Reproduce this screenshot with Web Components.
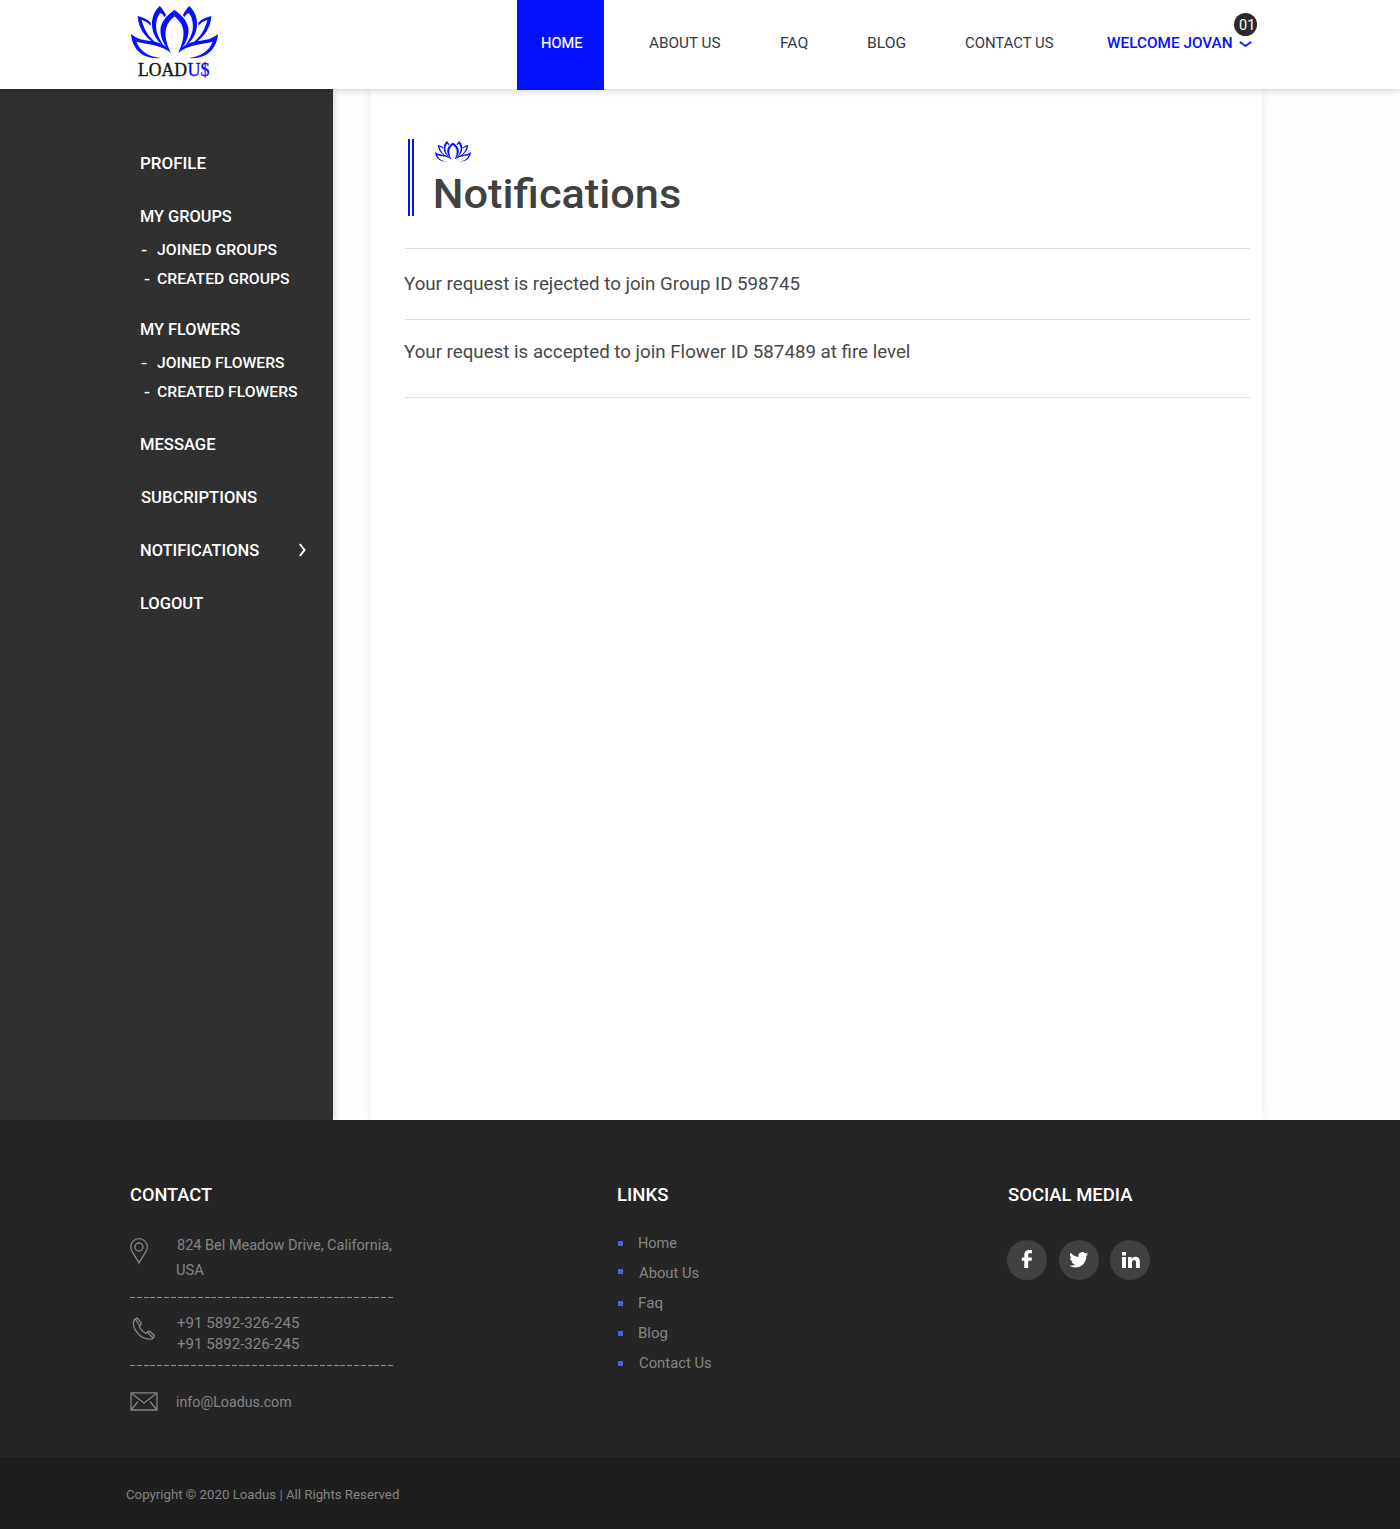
<!DOCTYPE html>
<html lang="en"><head><meta charset="utf-8"><title>Loadus - Notifications</title>
<style>
html,body{margin:0;background:#fefefe;font-family:Roboto,"Open Sans",sans-serif}
</style></head><body><loadus-app></loadus-app>
<script>
const ctx=document.createElement('canvas').getContext('2d');
// A single line of text stretched so that its ink is exactly `w` pixels wide.
class FitText extends HTMLElement{
  connectedCallback(){
    if(!this.shadowRoot)this.attachShadow({mode:'open'}).innerHTML='<style>:host{display:block;white-space:pre;flex:none}span{display:inline-block;vertical-align:top;transform-origin:0 0}</style><span><slot></slot></span>';
    const s=getComputedStyle(this),t=this.textContent,w=+this.getAttribute('w');
    ctx.font=`${s.fontWeight} ${s.fontSize} ${s.fontFamily}`;
    const m=ctx.measureText(t),k=w/(m.actualBoundingBoxLeft+m.actualBoundingBoxRight);
    this.style.width=w+'px';
    this.shadowRoot.querySelector('span').style.transform=`translateX(${(m.actualBoundingBoxLeft*k).toFixed(3)}px) scaleX(${k.toFixed(4)})`;
  }
}
class LotusMark extends HTMLElement{
  constructor(){super();this.attachShadow({mode:'open'}).innerHTML=`<style>:host{display:block}svg{display:block;width:100%;height:100%}</style>
  <svg viewBox="33 17 260 159" preserveAspectRatio="none" fill="#0410ff"><defs><g id="h">
  <path d="M163.500 28C140 45 121 65 121 90C121 116 133 136 150 153C141 135 132 106 138 84C142 68 152 58 163.500 48Z"/>
  <path d="M119 17C100 34 92 60 97 85C101 108 114 124 133 140C119 117 108 100 108 78C108 60 113 47 120 38C127 41 131 45 132 51L138 44C133 34 126 25 119 17Z"/>
  <path d="M53 47C55 82 74 118 128 143C101 124 83 105 74 85C70 75 66 67 65 58C76 62 86 68 91 76L92 67C80 55 66 50 53 47Z"/>
  <path d="M33 101C36 142 64 178 122 173C84 168 59 152 49 124C80 132 124 132 152 158C144 131 105 123 85 121C62 119 46 112 33 101Z"/></g></defs>
  <use href="#h"/><use href="#h" transform="matrix(-1 0 0 1 326 0)"/></svg>`}
}
class SiteHeader extends HTMLElement{
  constructor(){super();this.attachShadow({mode:'open'}).innerHTML=`<style>
  :host{display:flex;height:89px;background:#fff;box-shadow:0 1px 8px rgba(0,0,0,.2);position:relative;z-index:2;font-size:15px;line-height:20px;color:#343a47}
  .logo{margin-left:131px;width:87px;padding-top:6px}
  lotus-mark{width:87px;height:53px}
  .word{display:flex;gap:1px;margin:1px 0 0 6.500px;font:18px/20px "Liberation Serif",serif;color:#111;-webkit-text-stroke:.35px currentColor}
  .word b{display:block;font-weight:400;color:#0410ff}
  nav{display:flex;margin-left:299px;padding-top:33px}
  nav>*{margin-right:60px}
  .home{background:#0410ff;color:#fff;height:57px;width:62.500px;padding:33px 0 0 24.500px;margin:-33px 44.500px 0 0;-webkit-text-stroke:.2px #fff}
  .user{display:flex;color:#0410ff;font-weight:500;margin:0;position:relative}
  .chev{margin:8px 0 0 7.500px;width:13px;height:7px}
  .badge{position:absolute;left:127.500px;top:-20px;width:23px;height:23px;border-radius:50%;background:#2b2b2b;color:#fff;font-weight:400;line-height:24px;box-sizing:border-box;padding-left:4.500px}
  </style>
  <div class="logo"><lotus-mark></lotus-mark><div class="word"><fit-text w="49">LOAD</fit-text><b><fit-text w="22">U$</fit-text></b></div></div>
  <nav><div class="home"><fit-text w="41">HOME</fit-text></div><fit-text w="72">ABOUT US</fit-text><fit-text w="27">FAQ</fit-text><fit-text w="38" style="margin-right:59.500px">BLOG</fit-text><fit-text w="89" style="margin-right:52.500px">CONTACT US</fit-text>
  <div class="user"><fit-text w="125">WELCOME JOVAN</fit-text><svg class="chev" viewBox="0 0 13 7" fill="none" stroke="#0410ff" stroke-width="1.800"><path d="M.8 1L6.500 5L12.200 1"/></svg><div class="badge"><fit-text w="14">01</fit-text></div></div></nav>`}
}
class SideMenu extends HTMLElement{
  constructor(){super();
  const rows=[[64,'PROFILE',65],[33,'MY GROUPS',91],[14,'JOINED GROUPS',120,1],[9,'CREATED GROUPS',132.5,5],[30,'MY FLOWERS',99.5],[14,'JOINED FLOWERS',127.5,1],[9,'CREATED FLOWERS',140.5,5],[32,'MESSAGE',74.5],[33,'SUBCRIPTIONS',116.5],[33,'NOTIFICATIONS',118.5],[33,'LOGOUT',62.5]];
  this.attachShadow({mode:'open'}).innerHTML=`<style>:host{display:block;width:333px;background:#303030;color:#fff;font-weight:500;font-size:16px;line-height:22px;box-shadow:0 0 7px rgba(0,0,0,.22)}
  .row{display:flex;height:20px;padding-left:140.500px}.sub{font-size:15px;line-height:20px;padding-left:0}.dash{box-sizing:border-box;width:157px}
  svg{margin:3px 0 0 40px;width:7px;height:14px}</style>`+
  rows.map(([m,t,w,d],i)=>`<div class="row${d?' sub':''}" style="${i?'margin':'padding'}-top:${m}px">${d?`<div class="dash" style="padding-left:${139.5+(d==5?4.5:1)}px"><fit-text w="6">-</fit-text></div>`:''}<fit-text w="${w}">${t}</fit-text>${t=='NOTIFICATIONS'?'<svg viewBox="0 0 7 14" fill="none" stroke="#fff" stroke-width="2"><path d="M.8 1L5.500 7L.8 13"/></svg>':''}</div>`).join('')}
}
class NoticePanel extends HTMLElement{
  constructor(){super();this.attachShadow({mode:'open'}).innerHTML=`<style>
  :host{display:block;box-sizing:border-box;width:891px;margin-left:38px;padding:50px 12px 0 34px;background:#fff;box-shadow:0 0 9px rgba(0,0,0,.09);color:#484848;font-size:18px}
  .head{display:flex;height:109px;border-bottom:1px solid #ddd}
  .bars{box-sizing:border-box;width:6px;height:77px;margin-left:3px;border:solid #0410ff;border-width:0 2px}
  .title{margin-left:21px;padding-top:2px;font-size:40px;font-weight:500;line-height:48px;color:#414141}
  lotus-mark{width:36px;height:21px;margin-bottom:9px}
  .n{box-sizing:border-box;line-height:24px;border-bottom:1px solid #ddd}.n fit-text{margin-left:-1px}
  </style><div class="head"><div class="bars"></div><div class="title"><lotus-mark></lotus-mark><fit-text w="244.5" style="margin-left:-.5px">Notifications</fit-text></div></div>
  <div class="n" style="height:71px;padding-top:23px"><fit-text w="396">Your request is rejected to join Group ID 598745</fit-text></div>
  <div class="n" style="height:78px;padding-top:20px"><fit-text w="505">Your request is accepted to join Flower ID 587489 at fire level</fit-text></div>`}
}
class SiteFooter extends HTMLElement{
  constructor(){super();
  const links=[['Home',38,8],['About Us',59.5,6],['Faq',23.5,8],['Blog',28.5,8],['Contact Us',72,8]];
  this.attachShadow({mode:'open'}).innerHTML=`<style>
  :host{display:block;background:#252525;color:#858585;font-size:15px;line-height:20px;position:relative;z-index:3}
  .cols{display:flex;height:337px}.cols>section{padding-top:65px}
  h3{margin:0;font-size:18px;font-weight:500;color:#fff;line-height:20px}
  .contact{margin-left:130px;width:488px}.links{width:389.500px}
  .item{display:flex;width:263px;box-sizing:border-box}.ico{width:46.500px;flex:none}.ico svg{display:block;overflow:visible;fill:none;stroke:#858585;stroke-width:1.300}
  .dash{height:1px;width:263px;background:repeating-linear-gradient(90deg,#8d8d8d 0 5px,transparent 5px 6.790px)}
  .lk{display:flex;height:20px;margin-bottom:10px}.lk i{width:5px;height:5px;background:#4169df;margin-right:15.500px}
  .soc{display:flex;margin:35px 0 0 -.5px}.soc div{width:40px;height:40px;border-radius:50%;background:#414141;margin-right:12px}.soc div:nth-child(2){margin-right:11px}
  .soc svg{display:block;fill:#fff}
  .copy{height:72px;box-sizing:border-box;background:#1e1e1e;padding:28px 0 0 126px;font-size:13px}
  </style><div class="cols"><section class="contact"><h3><fit-text w="82">CONTACT</fit-text></h3>
  <div class="item" style="padding-top:30px;height:92px"><div class="ico"><svg width="19" height="26" style="margin-top:3px" viewBox="0 0 19 26"><path d="M9 25C7 20 .7 14 .7 9A8.300 8.300 0 0 1 17.300 9C17.300 14 11 20 9 25Z"/><circle cx="9" cy="9" r="4"/></svg></div><div><fit-text w="215">824 Bel Meadow Drive, California,</fit-text><fit-text w="27" style="margin-top:5px">USA</fit-text></div></div>
  <div class="dash"></div>
  <div class="item" style="height:67px;padding-top:15px"><div class="ico"><svg width="24" height="24" style="margin:3.500px 0 0 1.500px" viewBox="0 0 24 24"><path d="M2.800 2.300L5 1L9 5.500V7.500L7.200 9.800C9 13 11 15 13.800 16.500L16 14.500H18L22.300 18.500L21.800 20.300L20 21.800C8 24-1 10 2.200 3ZM3.300 2.200L7.500 8.300M15.500 15.500L20.800 20.700"/></svg></div><div><fit-text w="122">+91 5892-326-245</fit-text><fit-text w="122" style="margin-top:1px">+91 5892-326-245</fit-text></div></div>
  <div class="dash"></div>
  <div class="item" style="padding-top:26px"><div class="ico"><svg width="28" height="19" style="margin-top:-.5px" viewBox="0 0 28 19"><path d="M1 .8H27V18H1ZM1 1L14 11L27 1M1 18L8 9.500M27 18L20 9.500"/></svg></div><fit-text w="114.5">info@Loadus.com</fit-text></div>
  </section><section class="links"><h3 style="margin-bottom:28px"><fit-text w="50.5">LINKS</fit-text></h3>${links.map(([t,w,m])=>`<div class="lk"><i style="margin-top:${m}px"></i><fit-text w="${w}">${t}</fit-text></div>`).join('')}</section>
  <section><h3><fit-text w="124.5">SOCIAL MEDIA</fit-text></h3><div class="soc">
  <div><svg width="40" height="40"><path d="M17.300 28V20.700H14.800V17.500H17.300V15C17.300 11.800 19.200 10 22.200 10H25V13.300H23C21.600 13.300 21.200 14 21.200 15V17.500H25L24.500 20.700H21.200V28Z"/></svg></div>
  <div><svg width="40" height="40"><path transform="translate(10.300 10.300) scale(.79)" d="M24 4.600a10 10 0 0 1-2.800.8 5 5 0 0 0 2.100-2.700c-1 .6-2 1-3.100 1.200a4.900 4.900 0 0 0-8.400 4.500C7.700 8.200 4.100 6.200 1.700 3.200a4.900 4.900 0 0 0 1.500 6.600 5 5 0 0 1-2.200-.6v.1a4.900 4.900 0 0 0 3.900 4.800 5 5 0 0 1-2.200.1 4.900 4.900 0 0 0 4.600 3.400A9.900 9.900 0 0 1 0 19.600a14 14 0 0 0 7.500 2.200c9.100 0 14-7.500 14-14v-.6A10 10 0 0 0 24 4.600z"/></svg></div>
  <div><svg width="40" height="40"><path d="M12 17H16V28H12ZM12 12H16V15.500H12ZM18 17H21.700V18.700C22.500 17.400 23.800 16.700 25.500 16.700C28.500 16.700 29.800 18.500 29.800 21.500V28H26V22.300C26 20.800 25.500 19.900 24.200 19.900C22.700 19.900 22 20.900 22 22.500V28H18Z"/></svg></div>
  </div></section></div><div class="copy"><fit-text w="273">Copyright © 2020 Loadus | All Rights Reserved</fit-text></div>`}
}
class LoadusApp extends HTMLElement{
  constructor(){super();this.attachShadow({mode:'open'}).innerHTML=`<style>:host{display:block;height:1529px;overflow:hidden}main{display:flex;height:1031px}</style><site-header></site-header><main><side-menu></side-menu><notice-panel></notice-panel></main><site-footer></site-footer>`}
}
customElements.define('lotus-mark',LotusMark);
customElements.define('site-header',SiteHeader);
customElements.define('side-menu',SideMenu);
customElements.define('notice-panel',NoticePanel);
customElements.define('site-footer',SiteFooter);
customElements.define('loadus-app',LoadusApp);
customElements.define('fit-text',FitText);
</script></body></html>
